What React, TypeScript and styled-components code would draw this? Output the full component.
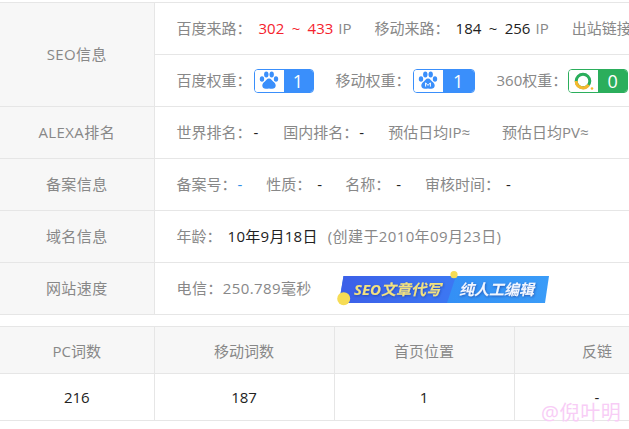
import { FC } from 'react';
import styled, { createGlobalStyle } from 'styled-components';

const GlobalStyle = createGlobalStyle`
  html, body {
    margin: 0;
    padding: 0;
    background: #fff;
    overflow: hidden;
  }
  body {
    font-family: 'Open Sans', 'Noto Sans CJK SC', sans-serif;
    font-size: 15px;
    color: #888;
  }
`;

const BLUE = '#3a8ffb';
const GREEN = '#2bae5c';

const Page = styled.div`
  position: relative;
  width: 629px;
  height: 429px;
  overflow: hidden;
  padding-top: 2px;
  box-sizing: border-box;
`;

const Table = styled.table<{ $width: number; $gap?: number }>`
  width: ${(p) => p.$width}px;
  table-layout: fixed;
  border-collapse: collapse;
  margin-top: ${(p) => p.$gap ?? 0}px;
  white-space: nowrap;

  th, td {
    border: 1px solid #e6e6e6;
    font-weight: 400;
    padding: 0;
  }
  th:first-child, td:first-child {
    border-left: 0;
  }
`;

const RowHead = styled.th`
  height: 49px;
  padding-bottom: 2px !important;
  background: #f7f7f7;
  color: #888;
  text-align: center;
  letter-spacing: 0.4px;
`;

const InfoCell = styled.td`
  height: 49px;
  padding: 0 0 2px 22px !important;
`;

const Line = styled.div<{ $gap?: number }>`
  display: flex;
  align-items: center;
  gap: ${(p) => p.$gap ?? 23}px;
`;

const Item = styled.span<{ $extra?: number }>`
  display: inline-flex;
  align-items: center;
  margin-right: ${(p) => p.$extra ?? 0}px;
`;

const Label = styled.span<{ $track?: number }>`
  color: #888;
  letter-spacing: ${(p) => p.$track ?? 0}px;
`;

const Value = styled.span<{ $tone?: 'red' | 'dark' | 'blue'; $indent?: number; $track?: number }>`
  margin-left: ${(p) => p.$indent ?? 6}px;
  word-spacing: 3.5px;
  letter-spacing: ${(p) => p.$track ?? 0}px;
  color: ${(p) =>
    p.$tone === 'red' ? '#f5222d' : p.$tone === 'blue' ? '#2f8fe8' : '#222'};
`;

const Unit = styled.span`
  margin-left: 5px;
  color: #888;
`;

const Note = styled.span`
  margin-left: 10px;
  color: #888;
  letter-spacing: 0.38px;
`;

const Rank = styled.span<{ $color: string; $indent?: number; $width?: number }>`
  display: inline-flex;
  width: ${(p) => p.$width ?? 60}px;
  height: 24px;
  margin: 2px 0 0 ${(p) => p.$indent ?? 2}px;
  box-sizing: border-box;
  border: 1px solid ${(p) => p.$color};
  border-radius: 4px;
  overflow: hidden;
`;

const RankIcon = styled.span`
  width: 29px;
  display: flex;
  align-items: center;
  justify-content: center;
  background: #fff;
`;

const RankNum = styled.span<{ $color: string }>`
  flex: 1;
  display: flex;
  align-items: center;
  justify-content: center;
  background: ${(p) => p.$color};
  color: #fff;
  font-size: 18px;
  line-height: 1;
`;

const Banner = styled.svg`
  display: block;
  margin-top: 2px;
`;

const HeadCell = styled.th`
  height: 46px;
  background: #f7f7f7;
  color: #888;
  text-align: center;
`;

const BodyCell = styled.td`
  height: 46px;
  color: #222;
  text-align: center;
`;

const Watermark = styled.div`
  position: absolute;
  left: 541px;
  top: 400px;
  font-size: 20px;
  line-height: 26px;
  letter-spacing: 0.6px;
  color: #f8cdf6;
`;

const Paw: FC<{ mobile?: boolean }> = ({ mobile }) => (
  <svg width="20" height="19" viewBox="0 0 20 19">
    <g fill={BLUE}>
      <ellipse cx="3" cy="8" rx="2.2" ry="2.8" />
      <ellipse cx="7.3" cy="3.4" rx="2.2" ry="3" />
      <ellipse cx="12.7" cy="3.4" rx="2.2" ry="3" />
      <ellipse cx="17" cy="8" rx="2.2" ry="2.8" />
      <path d="M10 7.6c2.2 0 3 2 4.4 3.2 1.4 1.1 2.3 2.2 2.3 3.7 0 2.3-2 3.6-4 3.3-1-.1-1.8-.4-2.7-.4s-1.7.3-2.7.4c-2 .3-4-1-4-3.3 0-1.5.9-2.6 2.3-3.7C7 9.6 7.8 7.6 10 7.6z" />
    </g>
    {mobile && (
      <path d="M7.6 15.6v-3.8l2.4 2.6 2.4-2.6v3.8" fill="none" stroke="#fff" strokeWidth="1" />
    )}
  </svg>
);

const Ring: FC = () => (
  <svg width="21" height="20" viewBox="0 0 21 20">
    <circle cx="10" cy="10" r="6.8" fill="none" stroke={GREEN} strokeWidth="3" />
    <path d="M3.2 10a6.8 6.8 0 0 0 12.4 3.9" fill="none" stroke="#f5b82e" strokeWidth="3" />
    <circle cx="19" cy="17.5" r="1.3" fill="#f5b82e" />
  </svg>
);

const SeoBanner: FC = () => (
  <Banner width="214" height="36" viewBox="0 0 214 36">
    <defs>
      <linearGradient id="left" x1="0" x2="1" y1="0" y2="0">
        <stop offset="0" stopColor="#3c5fe8" />
        <stop offset="1" stopColor="#3c78f3" />
      </linearGradient>
      <linearGradient id="right" x1="0" x2="1" y1="0" y2="0">
        <stop offset="0" stopColor="#2d82f2" />
        <stop offset="1" stopColor="#3a9cf8" />
      </linearGradient>
      <filter id="soft" x="-5%" y="-20%" width="110%" height="140%">
        <feDropShadow dx="0.6" dy="1" stdDeviation="0.8" floodColor="#1c3a9a" floodOpacity="0.7" />
      </filter>
    </defs>
    <path d="M6.5 5H212l-4 27H2z" fill="url(#right)" />
    <path d="M6.5 5H119l-9 27H2z" fill="url(#left)" />
    <circle cx="117" cy="3.7" r="3.6" fill="#f6dc55" />
    <circle cx="6.7" cy="27.7" r="6.5" fill="#f6dc55" />
    <g filter="url(#soft)" fontFamily="'Open Sans', 'Noto Sans CJK SC', sans-serif" fontWeight="700" fontStyle="italic" fontSize="15">
      <text x="17" y="24" fill="#f2e27e">SEO文章代写</text>
      <text x="122" y="24" fill="#f2f6ff">纯人工编辑</text>
    </g>
  </Banner>
);

const App: FC = () => (
  <>
    <GlobalStyle />
    <Page>
      <Table $width={900}>
        <colgroup>
          <col width={154} />
          <col />
        </colgroup>
        <tbody>
          <tr>
            <RowHead rowSpan={2}>SEO信息</RowHead>
            <InfoCell>
              <Line>
                <Item>
                  <Label>百度来路：</Label>
                  <Value $tone="red" $indent={7}>302 ~ 433</Value>
                  <Unit>IP</Unit>
                </Item>
                <Item>
                  <Label>移动来路：</Label>
                  <Value>184 ~ 256</Value>
                  <Unit>IP</Unit>
                </Item>
                <Item>
                  <Label>出站链接：</Label>
                </Item>
              </Line>
            </InfoCell>
          </tr>
          <tr>
            <InfoCell>
              <Line $gap={22}>
                <Item>
                  <Label>百度权重：</Label>
                  <Rank $color={BLUE}>
                    <RankIcon><Paw /></RankIcon>
                    <RankNum $color={BLUE}>1</RankNum>
                  </Rank>
                </Item>
                <Item>
                  <Label>移动权重：</Label>
                  <Rank $color={BLUE} $width={62}>
                    <RankIcon><Paw mobile /></RankIcon>
                    <RankNum $color={BLUE}>1</RankNum>
                  </Rank>
                </Item>
                <Item>
                  <Label>360权重：</Label>
                  <Rank $color={GREEN} $indent={1}>
                    <RankIcon><Ring /></RankIcon>
                    <RankNum $color={GREEN}>0</RankNum>
                  </Rank>
                </Item>
              </Line>
            </InfoCell>
          </tr>
          <tr>
            <RowHead>ALEXA排名</RowHead>
            <InfoCell>
              <Line $gap={22}>
                <Item $extra={3}><Label>世界排名：</Label><Value $indent={2}>-</Value></Item>
                <Item $extra={2}><Label>国内排名：</Label><Value $indent={1}>-</Value></Item>
                <Item $extra={10}><Label>预估日均IP≈</Label></Item>
                <Item><Label>预估日均PV≈</Label></Item>
              </Line>
            </InfoCell>
          </tr>
          <tr>
            <RowHead>备案信息</RowHead>
            <InfoCell>
              <Line $gap={23}>
                <Item $extra={1}><Label>备案号：</Label><Value $tone="blue" $indent={1}>-</Value></Item>
                <Item><Label>性质：</Label><Value>-</Value></Item>
                <Item $extra={1}><Label>名称：</Label><Value>-</Value></Item>
                <Item><Label>审核时间：</Label><Value>-</Value></Item>
              </Line>
            </InfoCell>
          </tr>
          <tr>
            <RowHead>域名信息</RowHead>
            <InfoCell>
              <Line>
                <Item>
                  <Label>年龄：</Label>
                  <Value $track={0.3}>10年9月18日</Value>
                  <Note>(创建于2010年09月23日)</Note>
                </Item>
              </Line>
            </InfoCell>
          </tr>
          <tr>
            <RowHead>网站速度</RowHead>
            <InfoCell>
              <Line $gap={25}>
                <Item>
                  <Label $track={0.4}>电信：250.789毫秒</Label>
                </Item>
                <SeoBanner />
              </Line>
            </InfoCell>
          </tr>
        </tbody>
      </Table>
      <Table $width={680} $gap={11}>
        <colgroup>
          <col width={154} />
          <col width={180} />
          <col width={180} />
          <col width={166} />
        </colgroup>
        <tbody>
          <tr>
            <HeadCell>PC词数</HeadCell>
            <HeadCell>移动词数</HeadCell>
            <HeadCell>首页位置</HeadCell>
            <HeadCell>反链</HeadCell>
          </tr>
          <tr>
            <BodyCell>216</BodyCell>
            <BodyCell>187</BodyCell>
            <BodyCell>1</BodyCell>
            <BodyCell>-</BodyCell>
          </tr>
        </tbody>
      </Table>
      <Watermark>@倪叶明</Watermark>
    </Page>
  </>
);

export default App;
